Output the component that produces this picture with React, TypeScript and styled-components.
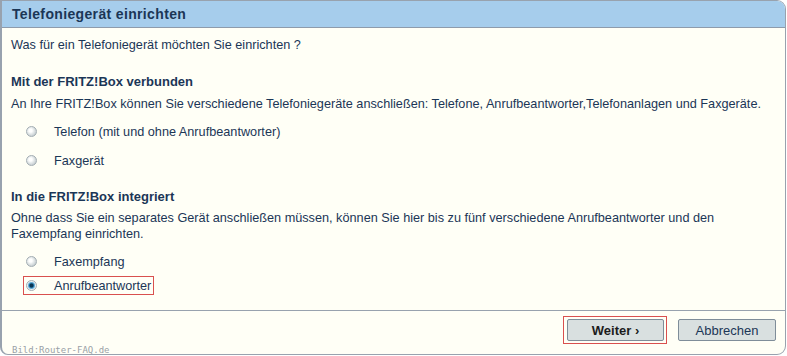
import styled, { createGlobalStyle } from "styled-components";

const GlobalStyle = createGlobalStyle`
  html, body {
    margin: 0;
    padding: 0;
    background: #ffffff;
  }
  body {
    font-family: "Liberation Sans", Arial, sans-serif;
    font-size: 12.7px;
    color: #1b3656;
  }
`;

interface OptionProps {
  label: string;
  checked?: boolean;
  marked?: boolean;
}

const RadioOption = ({ label, checked, marked }: OptionProps) => (
  <OptionRow $marked={marked}>
    <RadioDot $checked={checked} />
    <OptionLabel>{label}</OptionLabel>
  </OptionRow>
);

const App = () => {
  return (
    <>
      <GlobalStyle />
      <Panel>
        <Header>Telefoniegerät einrichten</Header>
        <Body>
          <TextLine>Was für ein Telefoniegerät möchten Sie einrichten ?</TextLine>

          <SectionTitle $top={21}>Mit der FRITZ!Box verbunden</SectionTitle>
          <TextLine $top={6}>
            An Ihre FRITZ!Box können Sie verschiedene Telefoniegeräte anschließen: Telefone,
            Anrufbeantworter,Telefonanlagen und Faxgeräte.
          </TextLine>
          <OptionList $gap={10}>
            <RadioOption label="Telefon (mit und ohne Anrufbeantworter)" />
            <RadioOption label="Faxgerät" />
          </OptionList>

          <SectionTitle $top={19}>In die FRITZ!Box integriert</SectionTitle>
          <TextBlock>
            Ohne dass Sie ein separates Gerät anschließen müssen, können Sie hier bis zu fünf
            verschiedene Anrufbeantworter und den
            <br />
            Faxempfang einrichten.
          </TextBlock>
          <OptionList $gap={5}>
            <RadioOption label="Faxempfang" />
            <RadioOption label="Anrufbeantworter" checked marked />
          </OptionList>
        </Body>
        <Footer>
          <Watermark>Bild:Router-FAQ.de</Watermark>
          <ButtonFrame>
            <Button $primary>Weiter ›</Button>
          </ButtonFrame>
          <Button>Abbrechen</Button>
        </Footer>
      </Panel>
    </>
  );
};

const Panel = styled.div`
  width: 786px;
  height: 355px;
  box-sizing: border-box;
  border: 1px solid #98a2ae;
  border-left-width: 2px;
  border-radius: 0 9px 9px 8px;
  background: #fffff6;
  overflow: hidden;
  display: flex;
  flex-direction: column;
`;

const Header = styled.div`
  height: 27px;
  flex-shrink: 0;
  box-sizing: border-box;
  background: #a6cdec;
  border-bottom: 1px solid #8e9bab;
  padding: 5px 0 0 10px;
  font-size: 14px;
  line-height: 16px;
  font-weight: bold;
  color: #1b3656;
  letter-spacing: 0.35px;
`;

const Body = styled.div`
  flex: 1;
  padding: 9px 0 0 9px;
`;

const TextLine = styled.div<{ $top?: number }>`
  margin-top: ${({ $top }) => $top ?? 0}px;
  line-height: 16px;
  white-space: nowrap;
`;

const TextBlock = styled.div`
  margin-top: 5px;
  line-height: 16px;
`;

const SectionTitle = styled.div<{ $top: number }>`
  margin-top: ${({ $top }) => $top}px;
  font-size: 13px;
  font-weight: bold;
  line-height: 16px;
`;

const OptionList = styled.div<{ $gap: number }>`
  display: flex;
  flex-direction: column;
  align-items: flex-start;
  gap: ${({ $gap }) => $gap}px;
  margin: 10px 0 0 12px;
`;

const OptionRow = styled.div<{ $marked?: boolean }>`
  display: flex;
  align-items: center;
  height: 17px;
  padding: 0 2px 0 2px;
  border: 1px solid ${({ $marked }) => ($marked ? "#d9504f" : "transparent")};
`;

const RadioDot = styled.span<{ $checked?: boolean }>`
  width: 11px;
  height: 11px;
  flex-shrink: 0;
  border-radius: 50%;
  box-sizing: border-box;
  border: 1px solid #a3adb3;
  background: ${({ $checked }) =>
    $checked
      ? "radial-gradient(circle at 50% 50%, #0b3553 0 1.6px, #3a96cc 2.6px, #8cc2e0 3.4px, #e9eef0 4px)"
      : "radial-gradient(circle at 40% 40%, #ffffff 0 1.5px, #e2e7e8 3.5px, #c9d0d3 5.5px)"};
`;

const OptionLabel = styled.span`
  margin-left: 17px;
  line-height: 16px;
`;

const Footer = styled.div`
  position: relative;
  height: 44px;
  flex-shrink: 0;
  box-sizing: border-box;
  border-top: 1px solid #98a2ae;
  display: flex;
  justify-content: flex-end;
  align-items: flex-start;
  gap: 11px;
  padding: 5px 9px 0 0;
`;

const Watermark = styled.div`
  position: absolute;
  left: 10px;
  top: 34px;
  font-family: "DejaVu Sans Mono", monospace;
  font-size: 9px;
  line-height: 10px;
  color: #9aa1a7;
`;

const ButtonFrame = styled.div`
  border: 1px solid #d9504f;
  padding: 2px 2px 2px 3px;
`;

const Button = styled.button<{ $primary?: boolean }>`
  width: ${({ $primary }) => ($primary ? 97 : 98)}px;
  height: 22px;
  margin-top: ${({ $primary }) => ($primary ? 0 : 3)}px;
  padding: 0;
  background: #d9e0e0;
  border: 1px solid #7f8d99;
  border-radius: 2px;
  font-family: "Liberation Sans", Arial, sans-serif;
  font-size: 13px;
  font-weight: ${({ $primary }) => ($primary ? "bold" : "normal")};
  color: ${({ $primary }) => ($primary ? "#1c1c1c" : "#1b3656")};
`;

export default App;
